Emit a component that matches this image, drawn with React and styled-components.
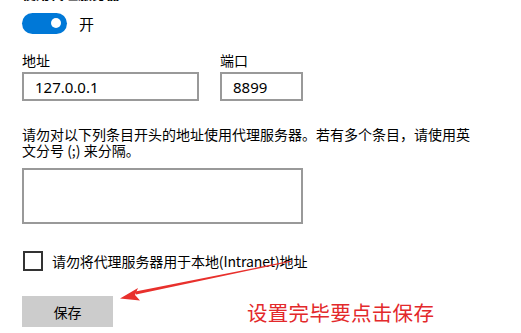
import React, { useState } from "react";
import styled, { createGlobalStyle } from "styled-components";

const GlobalStyle = createGlobalStyle`
  html, body {
    margin: 0;
    padding: 0;
    background: #fff;
  }
  body {
    font-family: "Noto Sans", "Noto Sans CJK SC", sans-serif;
    color: #000;
  }
`;

const Page = styled.div`
  position: relative;
  width: 521px;
  height: 333px;
  overflow: hidden;
  padding-left: 22px;
  box-sizing: border-box;
`;

// only the bottom sliver of the section title is visible at the top edge
const ClippedTitle = styled.div`
  height: 4px;
  overflow: hidden;
  font-family: "Noto Sans CJK SC", sans-serif;
  font-size: 14px;
  font-weight: bold;
  line-height: 18px;
  div {
    margin-top: -16px;
  }
`;

const ToggleRow = styled.div`
  display: flex;
  align-items: center;
  gap: 12px;
  margin-top: 8px;
  height: 22px;
`;

const Toggle = styled.button`
  position: relative;
  width: 45px;
  height: 21px;
  border: none;
  border-radius: 11px;
  background: ${(p) => (p.$on ? "#0078d7" : "#888")};
  padding: 0;
  cursor: pointer;
  &::after {
    content: "";
    position: absolute;
    top: 5.5px;
    left: ${(p) => (p.$on ? "29px" : "6px")};
    width: 10px;
    height: 10px;
    border-radius: 50%;
    background: #fff;
  }
`;

const ToggleText = styled.span`
  font-family: "Noto Sans CJK SC", sans-serif;
  font-size: 15px;
`;

const FieldsRow = styled.div`
  display: flex;
  gap: 21px;
  margin-top: 17px;
`;

const Field = styled.div`
  display: flex;
  flex-direction: column;
  gap: 3px;
`;

const Label = styled.label`
  font-family: "Noto Sans CJK SC", sans-serif;
  font-size: 14px;
  line-height: 18px;
`;

const TextInput = styled.input`
  box-sizing: border-box;
  width: ${(p) => p.$w}px;
  height: 29px;
  border: 2px solid #999;
  padding: 0 0 0 11px;
  font-family: "Noto Sans", sans-serif;
  font-size: 15px;
  color: #000;
  outline: none;
`;

const Note = styled.p`
  margin: 25px 0 0;
  font-family: "Noto Sans CJK SC", sans-serif;
  font-size: 14px;
  line-height: 16px;
  width: 470px;
`;

const Area = styled.textarea`
  display: block;
  box-sizing: border-box;
  width: 281px;
  height: 56px;
  margin-top: 10px;
  border: 2px solid #999;
  resize: none;
  outline: none;
`;

const CheckRow = styled.label`
  display: flex;
  align-items: center;
  gap: 9px;
  margin-top: 27px;
  font-family: "Noto Sans CJK SC", sans-serif;
  font-size: 14px;
  line-height: 20px;
  letter-spacing: -0.1px;
  cursor: pointer;
`;

const Box = styled.span`
  box-sizing: border-box;
  width: 20px;
  height: 20px;
  margin-left: 1px;
  border: 2px solid #333;
  background: ${(p) => (p.$checked ? "#333" : "#fff")};
`;

const ButtonRow = styled.div`
  display: flex;
  align-items: center;
  gap: 134px;
  margin-top: 25px;
`;

const SaveButton = styled.button`
  width: 91px;
  height: 31px;
  border: none;
  background: #cccccc;
  font-family: "Noto Sans CJK SC", sans-serif;
  font-size: 14px;
  color: #000;
  padding: 0;
`;

const Hint = styled.span`
  font-family: "Noto Sans CJK SC", sans-serif;
  font-size: 20.5px;
  color: #e3292b;
  letter-spacing: 0.3px;
`;

const Arrow = styled.svg`
  position: absolute;
  left: 0;
  top: 0;
  pointer-events: none;
`;

const App = () => {
  const [on, setOn] = useState(true);
  const [local, setLocal] = useState(false);

  return (
    <>
      <GlobalStyle />
      <Page>
        <ClippedTitle>
          <div>使用代理服务器</div>
        </ClippedTitle>
        <ToggleRow>
          <Toggle $on={on} onClick={() => setOn(!on)} />
          <ToggleText>{on ? "开" : "关"}</ToggleText>
        </ToggleRow>
        <FieldsRow>
          <Field>
            <Label>地址</Label>
            <TextInput $w={177} defaultValue="127.0.0.1" />
          </Field>
          <Field>
            <Label>端口</Label>
            <TextInput $w={83} defaultValue="8899" />
          </Field>
        </FieldsRow>
        <Note>
          请勿对以下列条目开头的地址使用代理服务器。若有多个条目，请使用英
          <br />
          文分号 (;) 来分隔。
        </Note>
        <Area />
        <CheckRow onClick={() => setLocal(!local)}>
          <Box $checked={local} />
          请勿将代理服务器用于本地(Intranet)地址
        </CheckRow>
        <ButtonRow>
          <SaveButton>保存</SaveButton>
          <Hint>设置完毕要点击保存</Hint>
        </ButtonRow>
        <Arrow width="521" height="333" viewBox="0 0 521 333">
          <path d="M292 261.5 L136 294.5 L135.4 291.5 L292 260.5 Z" fill="#e8302c" />
          <path d="M120 298.5 L138 288 L135 295 L140 300.5 Z" fill="#e8302c" />
        </Arrow>
      </Page>
    </>
  );
};

export default App;
